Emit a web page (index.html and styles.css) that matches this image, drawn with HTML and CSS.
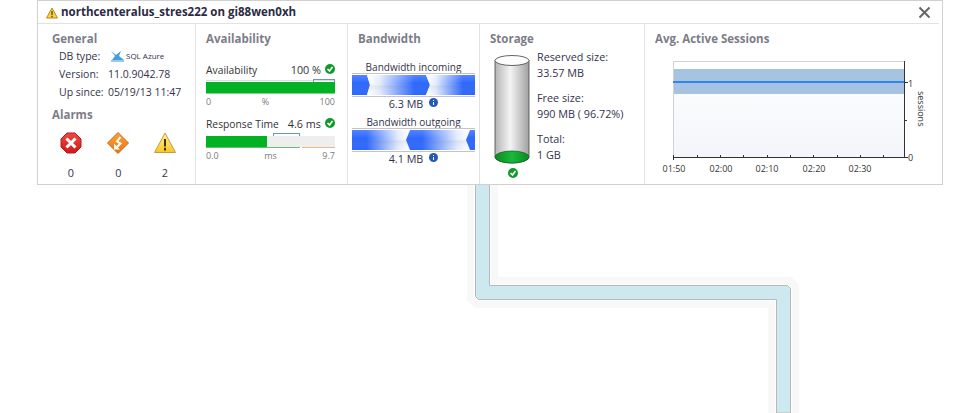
FILE: index.html
```html
<!DOCTYPE html>
<html lang="en">
<head>
<meta charset="utf-8">
<title>Database summary</title>
<link rel="stylesheet" href="styles.css">
</head>
<body>
<svg class="pipe" width="980" height="413" viewBox="0 0 980 413">
  <path d="M467 170V300L475 308H768V413H799V285L791 277H498V170Z" fill="#f8f8f8"/>
  <path d="M475.500 170V296.500L478.500 299.500H776.500V413H790.500V288.500L787.500 285.500H489.500V170Z" fill="#cce9ef" stroke="#fff" stroke-width="3"/>
  <path d="M475.500 170V296.500L478.500 299.500H776.500V413H790.500V288.500L787.500 285.500H489.500V170Z" fill="#cde9ef" stroke="#b8b8b8"/>
</svg>
<section class="panel">
  <header class="head">
    <svg class="head-icon" width="12" height="12" viewBox="0 0 12 12"><path d="M6 1 11.500 11H.5Z" fill="#fbd23f" stroke="#b98a14" stroke-linejoin="round"/><path d="M6 4v4M6 8.800v1.400" stroke="#4a3a10" stroke-width="1.200"/></svg>
    <h1 class="head-title">northcenteralus_stres222 on gi88wen0xh</h1>
    <svg class="close" width="13" height="13" viewBox="0 0 13 13"><path d="M1.500 1.500 11.500 11.500M11.500 1.500 1.500 11.500" stroke="#666" stroke-width="2"/></svg>
  </header>
  <div class="cols">
    <div class="col col-general">
      <h2 class="sec">General</h2>
      <div class="kv kv-first"><span class="k">DB type:</span>
        <svg class="sql-icon" width="15" height="13" viewBox="0 0 15 13"><path d="M1 1 6 5 11 1 9 6 14 10H2L5 6Z" fill="#3f9fe0"/><path d="M1 11h13" stroke="#9cc9e8" stroke-width="2"/></svg>
        <span class="sql">SQL Azure</span></div>
      <div class="kv"><span class="k">Version:</span><span class="v">11.0.9042.78</span></div>
      <div class="kv"><span class="k">Up since:</span><span class="v">05/19/13 11:47</span></div>
      <h2 class="sec sec-alarms">Alarms</h2>
      <div class="alarms">
        <div class="alarm">
          <svg width="24" height="24" viewBox="0 0 24 24">
            <defs><linearGradient id="red" x1="0" y1="0" x2="0" y2="1"><stop offset="0" stop-color="#ee4a40"/><stop offset="1" stop-color="#d4161a"/></linearGradient></defs>
            <path d="M8 2h8l6 6v8l-6 6H8l-6-6V8Z" fill="url(#red)" stroke="#b31c1c" stroke-linejoin="round"/>
            <path d="M7.500 7.500l9 9M16.500 7.500l-9 9" stroke="#fff" stroke-width="3"/>
          </svg>
          <span>0</span>
        </div>
        <div class="alarm">
          <svg width="24" height="24" viewBox="0 0 24 24">
            <defs><linearGradient id="org" x1="0" y1="0" x2="0" y2="1"><stop offset="0" stop-color="#f8a53c"/><stop offset="1" stop-color="#ec7410"/></linearGradient></defs>
            <path d="M12 1.500 22.500 12 12 22.500 1.500 12Z" fill="url(#org)" stroke="#d0690f" stroke-linejoin="round"/>
            <path d="M14.500 6 11 10.500l3.500 2-4.500 4.500" fill="none" stroke="#fff" stroke-width="2"/>
            <path d="M8 12.500v6h6Z" fill="#fff"/>
          </svg>
          <span>0</span>
        </div>
        <div class="alarm">
          <svg width="24" height="24" viewBox="0 0 24 24">
            <defs><linearGradient id="yel" x1="0" y1="0" x2="0" y2="1"><stop offset="0" stop-color="#fff09a"/><stop offset="1" stop-color="#fbc526"/></linearGradient></defs>
            <path d="M12 2 22.500 21.500H1.500Z" fill="url(#yel)" stroke="#bfa03a" stroke-linejoin="round"/>
            <path d="M12 8v7.500M12 16.800v2.700" stroke="#3d3312" stroke-width="2"/>
          </svg>
          <span>2</span>
        </div>
      </div>
    </div>

    <div class="col col-avail">
      <h2 class="sec">Availability</h2>
      <div class="metric metric-first">
        <div class="metric-row"><span>Availability</span><span class="metric-val">100 %<svg class="ok" width="10" height="10" viewBox="0 0 10 10"><circle cx="5" cy="5" r="5" fill="#0d9a2b"/><path d="M2.500 5 4.500 7 7.500 3" fill="none" stroke="#fff" stroke-width="1.700"/></svg></span></div>
        <div class="gauge gauge-a">
          <i class="mark mark-a"></i>
          <div class="fill"></div>
        </div>
        <div class="scale"><span>0</span><span>%</span><span>100</span></div>
      </div>
      <div class="metric metric-second">
        <div class="metric-row"><span class="dark">Response Time</span><span class="metric-val">4.6 ms<svg class="ok" width="10" height="10" viewBox="0 0 10 10"><circle cx="5" cy="5" r="5" fill="#0d9a2b"/><path d="M2.500 5 4.500 7 7.500 3" fill="none" stroke="#fff" stroke-width="1.700"/></svg></span></div>
        <div class="gauge gauge-b">
          <i class="mark mark-b"></i>
          <div class="fill fill-part"></div>
        </div>
        <div class="scale"><span>0.0</span><span>ms</span><span>9.7</span></div>
      </div>
    </div>

    <div class="col col-band">
      <h2 class="sec">Bandwidth</h2>
      <div class="band band-first">
        <div class="band-label">Bandwidth incoming</div>
        <svg class="flow" width="123" height="24" viewBox="0 0 123 24">
          <defs>
            <linearGradient id="r"><stop offset="0" stop-color="#fff"/><stop offset=".2" stop-color="#e4ecfd"/><stop offset=".75" stop-color="#2a66ff"/><stop offset="1" stop-color="#2a66ff"/></linearGradient>
            <linearGradient id="l"><stop offset="0" stop-color="#2a66ff"/><stop offset=".25" stop-color="#2a66ff"/><stop offset=".8" stop-color="#e4ecfd"/><stop offset="1" stop-color="#fff"/></linearGradient>
            <linearGradient id="sheen" x1="0" y1="0" x2="0" y2="1"><stop offset="0" stop-color="#fff" stop-opacity=".2"/><stop offset=".45" stop-color="#fff" stop-opacity="0"/><stop offset=".55" stop-color="#777" stop-opacity=".12"/><stop offset="1" stop-color="#fff" stop-opacity="0"/></linearGradient>
          </defs>
          <path d="M0 .5H123M0 23.500H123" stroke="#c4c4c4"/>
          <rect y="2" width="123" height="20" fill="#fff"/>
          <path d="M0 2H15L18 12 15 22H0Z" fill="#2a66ff"/>
          <path d="M15 2H74L78 12 74 22H15L18 12Z" fill="url(#r)"/>
          <path d="M74 2H123V22H74L78 12Z" fill="url(#r)"/>
          <rect y="2" width="123" height="20" fill="url(#sheen)"/>
        </svg>
        <div class="band-val">6.3 MB<svg class="info" width="9" height="9" viewBox="0 0 9 9"><circle cx="4.500" cy="4.500" r="4.500" fill="#2559b8"/><path d="M4.500 2v1M4.500 4v3" stroke="#fff"/></svg></div>
      </div>
      <div class="band band-second">
        <div class="band-label">Bandwidth outgoing</div>
        <svg class="flow" width="123" height="24" viewBox="0 0 123 24">
          <path d="M0 .5H123M0 23.500H123" stroke="#c4c4c4"/>
          <rect y="2" width="123" height="20" fill="#fff"/>
          <path d="M0 2H58L54 12 58 22H0Z" fill="url(#l)"/>
          <path d="M58 2H118L114 12 118 22H58L54 12Z" fill="url(#l)"/>
          <path d="M118 2H123V22H118L114 12Z" fill="#2a66ff"/>
          <rect y="2" width="123" height="20" fill="url(#sheen)"/>
        </svg>
        <div class="band-val">4.1 MB<svg class="info" width="9" height="9" viewBox="0 0 9 9"><circle cx="4.500" cy="4.500" r="4.500" fill="#2559b8"/><path d="M4.500 2v1M4.500 4v3" stroke="#fff"/></svg></div>
      </div>
    </div>

    <div class="col col-store">
      <h2 class="sec">Storage</h2>
      <div class="store">
        <div class="can">
          <svg width="38" height="113" viewBox="0 0 38 113">
            <defs>
              <linearGradient id="cyl"><stop offset="0" stop-color="#b4b4b4"/><stop offset=".45" stop-color="#f4f4f4"/><stop offset="1" stop-color="#a0a0a0"/></linearGradient>
              <linearGradient id="grn"><stop offset="0" stop-color="#0a8a22"/><stop offset=".5" stop-color="#18b93a"/><stop offset="1" stop-color="#0a8a22"/></linearGradient>
            </defs>
            <path d="M2 6.500V103A17 6 0 0 0 36 103V6.500Z" fill="url(#cyl)" stroke="#555" stroke-width=".9"/>
            <ellipse cx="19" cy="6.500" rx="17" ry="5" fill="#fdfdfd" stroke="#555" stroke-width=".9"/>
            <path d="M2 103A17 6 0 0 1 36 103A17 6 0 0 1 2 103Z" fill="url(#grn)" stroke="#0a6a1c" stroke-width=".8"/>
          </svg>
          <svg class="can-ok" width="10" height="10" viewBox="0 0 10 10"><circle cx="5" cy="5" r="5" fill="#0d9a2b"/><path d="M2.500 5 4.500 7 7.500 3" fill="none" stroke="#fff" stroke-width="1.700"/></svg>
        </div>
        <dl class="sizes">
          <dt>Reserved size:</dt><dd>33.57 MB</dd>
          <dt>Free size:</dt><dd>990 MB ( 96.72%)</dd>
          <dt>Total:</dt><dd>1 GB</dd>
        </dl>
      </div>
    </div>

    <div class="col col-sess">
      <h2 class="sec">Avg. Active Sessions</h2>
      <svg class="chart" width="296" height="135" viewBox="645 50 296 135">
        <defs><linearGradient id="plot" x1="0" y1="0" x2="0" y2="1"><stop offset="0" stop-color="#fff"/><stop offset="1" stop-color="#f3f5fa"/></linearGradient></defs>
        <rect x="673.500" y="60.500" width="231" height="96" fill="url(#plot)" stroke="#d2d2d2"/>
        <rect x="674" y="68" width="230" height="25" fill="#a6c3e2"/>
        <path d="M673 81H904" stroke="#2f86f0" stroke-width="2"/>
        <path d="M904.500 60V157M673 156.500H905" stroke="#333" fill="none"/>
        <path d="M673.500 159v-5M697.500 157v-3M720.500 157v-3M743.500 157v-3M767.500 157v-3M790.500 157v-3M813.500 157v-3M837.500 157v-3M860.500 157v-3M883.500 157v-3M904 81.500h4M904 119.500h3M904 156.500h4" stroke="#333" fill="none"/>
        <g class="tick">
          <text x="674" y="171" text-anchor="middle">01:50</text>
          <text x="721" y="171" text-anchor="middle">02:00</text>
          <text x="767" y="171" text-anchor="middle">02:10</text>
          <text x="814" y="171" text-anchor="middle">02:20</text>
          <text x="860" y="171" text-anchor="middle">02:30</text>
          <text x="908" y="86">1</text>
          <text x="908" y="160">0</text>
          <text transform="translate(918 90) rotate(90)">sessions</text>
        </g>
      </svg>
    </div>
  </div>
</section>
</body>
</html>
```
FILE: styles.css
```css
html, body { margin: 0; padding: 0; background: #fff; }
body {
  position: relative;
  width: 980px;
  height: 413px;
  overflow: hidden;
  font-family: "Open Sans", "Noto Sans", sans-serif;
  font-size: 10.800px;
  line-height: 14px;
  color: #33334d;
}
.pipe { position: absolute; left: 0; top: 0; }
.panel {
  position: relative;
  box-sizing: border-box;
  width: 906px;
  height: 185px;
  margin-left: 37px;
  background: #fff;
  border: 1px solid #d0d0d0;
  display: flex;
  flex-direction: column;
}
.head {
  height: 23px;
  box-sizing: border-box;
  flex: none;
  margin-right: 3px;
  border-bottom: 1px solid #e2e2e2;
  display: flex;
  align-items: center;
  padding-left: 8px;
}
.head-icon { flex: none; margin-top: 1px; }
.head-title {
  margin: -1px 0 0 3px;
  font-size: 11.500px;
  font-weight: 700;
  color: #2b2b44;
  flex: 1;
}
.close { flex: none; margin-right: 8px; }
.cols { flex: 1; display: flex; min-height: 0; }
.col { box-sizing: border-box; border-right: 1px solid #e2e2e2; flex: none; }
.sec {
  margin: 0;
  font-size: 11.500px;
  font-weight: 700;
  line-height: 14px;
  color: #7d7d88;
}
.col-general { width: 158px; padding: 8px 0 0 14px; }
.kv { display: flex; align-items: center; height: 18px; padding-left: 7px; font-size: 10.500px; white-space: nowrap; }
.kv-first { margin-top: 1px; }
.k { width: 49px; flex: none; }
.sql-icon { margin-left: 2px; flex: none; }
.sql { font-size: 8px; margin-left: 1px; }
.sec-alarms { margin-top: 7px; }
.alarms { display: flex; margin-top: 6px; margin-left: -5px; }
.alarm {
  flex: none;
  width: 47.500px;
  height: 52px;
  display: flex;
  flex-direction: column;
  align-items: center;
  justify-content: space-between;
}
.alarm svg { margin-top: 3px; }
.alarm:nth-child(3) { margin-left: -1px; }
.col-avail { width: 152px; padding: 8px 12px 0 10px; color: #333; }
.metric-first { margin-top: 17px; }
.metric-second { margin-top: 9px; }
.metric-row { display: flex; justify-content: space-between; height: 14px; font-size: 10.300px; }
.metric-val { display: flex; align-items: center; font-size: 10.800px; }
.ok { margin-left: 4px; margin-top: -3px; }
.gauge {
  position: relative;
  height: 14px;
  box-sizing: border-box;
  margin-top: 3px;
}
.gauge-a { border-top: 1px solid #ddd; border-bottom: 1px solid #8ccf8f; padding-top: 1px; }
.gauge-b { padding-top: 2px; background: linear-gradient(#fff 2px, #eee 2px, #eee 13px, #fff 13px); }
.gauge-b::before,
.gauge-b::after {
  content: "";
  position: absolute;
  bottom: 0;
  height: 1px;
}
.gauge-b::before { left: 0; width: 94px; background: #68bd6f; }
.gauge-b::after { left: 96px; right: 0; background: #e8b78b; }
.fill { height: 11px; background: #00b224; }
.fill-part { width: 61px; }
.mark { position: absolute; height: 2px; border: 1px solid #6d93bf; border-bottom: 0; }
.mark-a { right: 0; width: 20px; top: -2px; }
.mark-b { left: 67px; width: 25px; top: -1px; }
.scale {
  display: flex;
  justify-content: space-between;
  font-size: 9px;
  color: #7c7c7c;
  line-height: 13px;
  margin-top: 1px;
}
.col-band { width: 132px; padding: 8px 4px 0 10px; }
.band { margin-left: -6px; text-align: center; }
.band-first { margin-top: 14px; }
.band-second { margin-top: 4px; }
.band-label { height: 14px; font-size: 10px; }
.flow { display: block; margin-top: -1px; }
.band-val { height: 14px; display: flex; justify-content: center; align-items: center; }
.info { margin-left: 6px; margin-top: -3px; }
.col-store { width: 165px; padding: 8px 0 0 10px; }
.store { display: flex; margin-top: 3px; }
.can { width: 44px; flex: none; margin-left: 3px; padding-top: 5px; }
.can svg { display: block; }
.can .can-ok { margin: 1px 0 0 15px; }
.sizes { margin: 0; }
.sizes dt { height: 16px; line-height: 16px; }
.sizes dd { margin: 0 0 9px; height: 16px; line-height: 16px; }
.col-sess { width: 296px; padding: 8px 0 0 10px; border-right: 0; position: relative; }
.chart { position: absolute; left: 0; top: 27px; }
.tick text { font-family: "Open Sans", sans-serif; font-size: 9px; fill: #333; }
```
